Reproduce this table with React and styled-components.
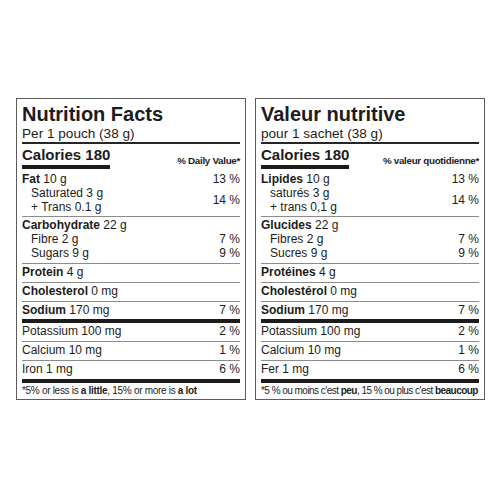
import React from "react";
import styled, { createGlobalStyle } from "styled-components";

const Global = createGlobalStyle`
  html, body { margin: 0; padding: 0; background: #fff; }
  body {
    font-family: "Liberation Sans", Arial, Helvetica, sans-serif;
    color: #1c1c1c;
  }
`;

const Page = styled.div`
  display: flex;
  gap: 9px;
  padding: 98px 0 0 16px;
`;

const Panel = styled.section`
  width: 230px;
  box-sizing: border-box;
  border: 1px solid #5c5c5c;
  padding: 0 5px;
  display: flex;
  flex-direction: column;
`;

const Title = styled.h1`
  margin: 0;
  padding-top: 4px;
  font-size: 20px;
  line-height: 23px;
  font-weight: 700;
  white-space: nowrap;
`;

const Serving = styled.div`
  font-size: 13.6px;
  line-height: 15px;
  padding-bottom: 1px;
  border-bottom: 2px solid #262626;
  white-space: nowrap;
`;

const CalRow = styled.div`
  display: flex;
  justify-content: space-between;
  align-items: flex-end;
  padding-top: 3px;
`;

const CalBlock = styled.div`
  display: flex;
  flex-direction: column;
  width: fit-content;
`;

const Calories = styled.div`
  font-size: 15px;
  line-height: 16px;
  font-weight: 700;
  white-space: nowrap;
`;

const CalBar = styled.div`
  height: 4px;
  margin-top: 2px;
  background: #1c1c1c;
`;

const DvHead = styled.div`
  font-size: 9.8px;
  line-height: 11px;
  font-weight: 700;
  letter-spacing: -0.3px;
  margin-bottom: 3px;
  white-space: nowrap;
`;

const rules = {
  thin: "1px solid #8c8c8c",
  thick: "4px solid #1c1c1c",
};

const Block = styled.div`
  padding: ${(p) => p.$pt}px 0 ${(p) => p.$pb}px;
  border-bottom: ${(p) => rules[p.$rule]};
`;

const Line = styled.div`
  display: flex;
  justify-content: space-between;
  align-items: center;
  font-size: 12px;
  line-height: 14px;
  padding-left: ${(p) => (p.$indent ? 9 : 0)}px;
  white-space: nowrap;
`;

const Stack = styled.div`
  display: flex;
  flex-direction: column;
`;

const Strong = styled.b`
  font-weight: 700;
`;

const Footnote = styled.div`
  font-size: 10px;
  letter-spacing: ${(p) => p.$track}px;
  line-height: 12px;
  padding: 2px 0 2px;
  white-space: nowrap;
`;

const Nutrient = ({ name, amount }) => (
  <span>
    <Strong>{name}</Strong>
    {amount}
  </span>
);

const Label = ({ d }) => (
  <Panel>
    <Title>{d.title}</Title>
    <Serving>{d.serving}</Serving>
    <CalRow>
      <CalBlock>
        <Calories>{d.calories}</Calories>
        <CalBar />
      </CalBlock>
      <DvHead>{d.dvHead}</DvHead>
    </CalRow>

    <Block $pt={3} $pb={2} $rule="thin">
      <Line>
        <Nutrient name={d.fat[0]} amount={d.fat[1]} />
        <span>{d.fat[2]}</span>
      </Line>
      <Line $indent>
        <Stack>
          <span>{d.sat}</span>
          <span>{d.trans}</span>
        </Stack>
        <span>{d.satDv}</span>
      </Line>
    </Block>

    <Block $pt={1} $pb={3} $rule="thin">
      <Line>
        <Nutrient name={d.carb[0]} amount={d.carb[1]} />
      </Line>
      {d.carbSubs.map(([t, v]) => (
        <Line $indent key={t}>
          <span>{t}</span>
          <span>{v}</span>
        </Line>
      ))}
    </Block>

    <Block $pt={1} $pb={3} $rule="thin">
      <Line>
        <Nutrient name={d.protein[0]} amount={d.protein[1]} />
      </Line>
    </Block>
    <Block $pt={1} $pb={3} $rule="thin">
      <Line>
        <Nutrient name={d.chol[0]} amount={d.chol[1]} />
      </Line>
    </Block>
    <Block $pt={1} $pb={2} $rule="thick">
      <Line>
        <Nutrient name={d.sodium[0]} amount={d.sodium[1]} />
        <span>{d.sodium[2]}</span>
      </Line>
    </Block>

    {d.minerals.map(([t, v], i) => (
      <Block
        key={t}
        $pt={1}
        $pb={3}
        $rule={i === d.minerals.length - 1 ? "thick" : "thin"}
      >
        <Line>
          <span>{t}</span>
          <span>{v}</span>
        </Line>
      </Block>
    ))}

    <Footnote $track={d.footTrack}>
      {d.foot[0]}
      <Strong>{d.foot[1]}</Strong>
      {d.foot[2]}
      <Strong>{d.foot[3]}</Strong>
    </Footnote>
  </Panel>
);

const en = {
  title: "Nutrition Facts",
  serving: "Per 1 pouch (38 g)",
  calories: "Calories 180",
  dvHead: "% Daily Value*",
  fat: ["Fat", " 10 g", "13 %"],
  sat: "Saturated 3 g",
  trans: "+ Trans 0.1 g",
  satDv: "14 %",
  carb: ["Carbohydrate", " 22 g"],
  carbSubs: [
    ["Fibre 2 g", "7 %"],
    ["Sugars 9 g", "9 %"],
  ],
  protein: ["Protein", " 4 g"],
  chol: ["Cholesterol", " 0 mg"],
  sodium: ["Sodium", " 170 mg", "7 %"],
  minerals: [
    ["Potassium 100 mg", "2 %"],
    ["Calcium 10 mg", "1 %"],
    ["Iron 1 mg", "6 %"],
  ],
  foot: ["*5% or less is ", "a little", ", 15% or more is ", "a lot"],
  footTrack: -0.3,
};

const fr = {
  title: "Valeur nutritive",
  serving: "pour 1 sachet (38 g)",
  calories: "Calories 180",
  dvHead: "% valeur quotidienne*",
  fat: ["Lipides", " 10 g", "13 %"],
  sat: "saturés 3 g",
  trans: "+ trans 0,1 g",
  satDv: "14 %",
  carb: ["Glucides", " 22 g"],
  carbSubs: [
    ["Fibres 2 g", "7 %"],
    ["Sucres 9 g", "9 %"],
  ],
  protein: ["Protéines", " 4 g"],
  chol: ["Cholestérol", " 0 mg"],
  sodium: ["Sodium", " 170 mg", "7 %"],
  minerals: [
    ["Potassium 100 mg", "2 %"],
    ["Calcium 10 mg", "1 %"],
    ["Fer 1 mg", "6 %"],
  ],
  foot: ["*5 % ou moins c'est ", "peu", ", 15 % ou plus c'est ", "beaucoup"],
  footTrack: -0.53,
};

export default function App() {
  return (
    <>
      <Global />
      <Page>
        <Label d={en} />
        <Label d={fr} />
      </Page>
    </>
  );
}
